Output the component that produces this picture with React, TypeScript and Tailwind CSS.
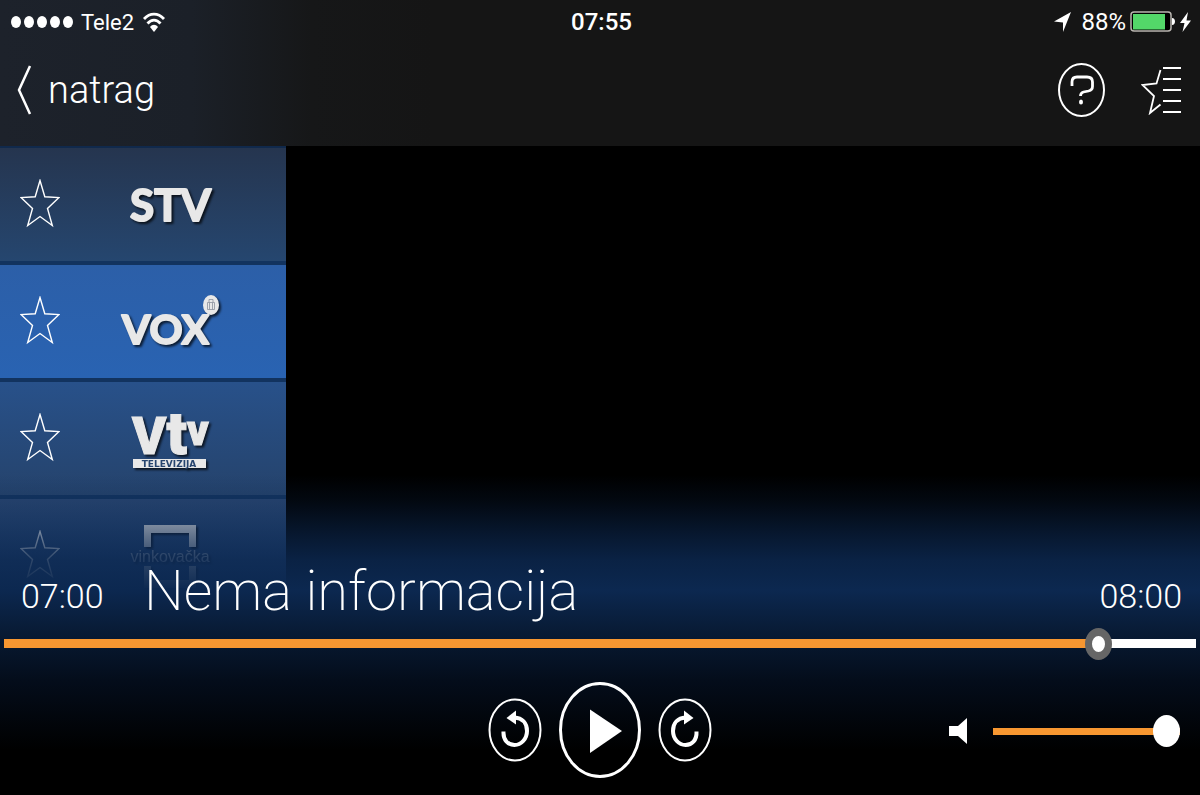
import React, { useState } from "react";

interface Channel {
  id: string;
  name: string;
  background: string;
  logo: React.ReactNode;
}

const StvLogo = () => (
  <svg width="92" height="44" viewBox="0 0 92 44" className="overflow-visible" aria-hidden="true">
    <text
      x="6"
      y="38"
      className="fill-[#e8e8e8] stroke-[#e8e8e8] font-['Lato'] text-[44px] font-bold"
      strokeWidth="2"
      strokeLinejoin="round"
    >
      STV
    </text>
  </svg>
);

const VoxLogo = () => (
  <svg width="104" height="56" viewBox="0 0 104 56" className="overflow-visible" aria-hidden="true">
    <text
      x="4"
      y="50"
      className="fill-[#e8e8e8] stroke-[#e8e8e8] font-['Lato'] text-[41px] font-bold"
      strokeWidth="2"
      strokeLinejoin="round"
    >
      VOX
    </text>
    <ellipse cx="93" cy="11" rx="8" ry="10" fill="#e8e8e8" />
    <path
      d="M89.500 8.500h7v7h-7zM91.500 8.500v7M94.500 8.500v7M91 8V5.500h4V8"
      fill="none"
      stroke="#8a919c"
      strokeWidth="0.800"
    />
  </svg>
);

const VtvLogo = () => (
  <svg width="80" height="62" viewBox="0 0 80 62" className="overflow-visible" aria-hidden="true">
    <text
      x="2"
      y="46"
      className="fill-[#e8e8e8] stroke-[#e8e8e8] font-['Roboto'] text-[52px] font-black"
      strokeWidth="1"
    >
      V
      <tspan className="text-[60px]">t</tspan>
      <tspan dy="-9" className="text-[42px]">
        v
      </tspan>
    </text>
    <rect x="3" y="51" width="73" height="9" fill="#e8e8e8" />
    <text
      x="39"
      y="59"
      textAnchor="middle"
      className="fill-[#27456f] text-[9px] font-bold [font-family:'DejaVu_Sans',sans-serif]"
    >
      TELEVIZIJA
    </text>
  </svg>
);

const VinkovackaLogo = () => (
  <svg width="84" height="66" viewBox="0 0 84 66" className="overflow-visible" aria-hidden="true">
    <path d="M16 24V2h52v22h-7V10H23v14zM16 43h7v14h38V43h7v22H16z" fill="#e8e8e8" />
    <text
      x="42"
      y="39"
      textAnchor="middle"
      className="fill-[#b4bdcb] text-[16px] [font-family:'Liberation_Sans',sans-serif]"
    >
      vinkovačka
    </text>
  </svg>
);

const channels: Channel[] = [
  {
    id: "stv",
    name: "STV",
    background: "bg-linear-to-b from-[#25354f] to-[#25466f]",
    logo: <StvLogo />,
  },
  {
    id: "vox",
    name: "VOX",
    background: "bg-linear-to-b from-[#2c5fa8] to-[#2963b2]",
    logo: <VoxLogo />,
  },
  {
    id: "vtv",
    name: "VTV Televizija",
    background: "bg-linear-to-b from-[#28518a] to-[#25436c]",
    logo: <VtvLogo />,
  },
  {
    id: "vinkovacka",
    name: "Vinkovačka televizija",
    background: "bg-linear-to-b from-[#294671] to-[#234a80]",
    logo: <VinkovackaLogo />,
  },
];

const StatusBar = () => (
  <div className="grid h-11 grid-cols-3 items-center pr-2 pl-[11px]">
    <div className="flex items-center gap-2 text-[22px]">
      <svg width="62" height="14" viewBox="0 0 62 14" fill="#fff" aria-hidden="true">
        {[5, 18, 31, 44, 57].map((cx) => (
          <ellipse key={cx} cx={cx} cy="7" rx="5" ry="6" />
        ))}
      </svg>
      <span>Tele2</span>
      <svg width="24" height="20" viewBox="0 0 24 20" aria-hidden="true">
        <path
          d="M2 7C8 0.500 16 0.500 22 7M5.500 11.500c4-4.500 9-4.500 13 0"
          fill="none"
          stroke="#fff"
          strokeWidth="2.800"
        />
        <path d="M8 15c2.500-3 5.500-3 8 0l-4 5z" fill="#fff" />
      </svg>
    </div>
    <span className="text-center text-2xl font-medium">07:55</span>
    <div className="flex items-center justify-end text-2xl">
      <svg width="17" height="20" viewBox="0 0 17 20" fill="#fff" aria-hidden="true">
        <path d="M17 0L9 20V10.500L0 9.500z" />
      </svg>
      <span className="ml-2.5">88%</span>
      <svg width="46" height="22" viewBox="0 0 46 22" className="ml-1" aria-hidden="true">
        <rect x="1" y="1" width="40" height="19" rx="3" fill="#000" stroke="#b9b5b0" strokeWidth="1.500" />
        <rect x="3" y="3" width="32" height="15.500" fill="#53d769" />
        <path d="M42 7c4 0 4 7 0 7z" fill="#fff" />
      </svg>
      <svg width="12" height="20" viewBox="0 0 12 20" fill="#fff" className="ml-1" aria-hidden="true">
        <path d="M8 0L0 11h4.500L2.500 20 11 8.500H6.500z" />
      </svg>
    </div>
  </div>
);

const Header = () => (
  <header className="bg-[linear-gradient(to_right,#1d222b,#1b2028_16%,#161718_26%,#151515_36%)] pb-[10px]">
    <StatusBar />
    <nav className="flex h-[92px] items-center justify-between pr-[18px] pl-[17px]">
      <a href="#natrag" className="flex items-center gap-4 text-[38px] leading-[48px] font-light">
        <svg width="15" height="50" viewBox="0 0 15 50" aria-hidden="true">
          <path d="M13 1L2 25l11 24" fill="none" stroke="#fff" strokeWidth="2.500" />
        </svg>
        natrag
      </a>
      <div className="flex items-center gap-9">
        <button type="button" aria-label="Pomoć">
          <svg width="48" height="56" viewBox="0 0 48 56" fill="none" stroke="#fff" aria-hidden="true">
            <ellipse cx="24.500" cy="28" rx="22.500" ry="26" strokeWidth="2" />
            <path
              d="M15 24v-4q0-5 5-5h10q5.500 0 5.500 5v4.500q0 3.500-4 4.500l-5 1q-3 .8-3 4"
              strokeWidth="2.800"
            />
            <ellipse cx="24" cy="40" rx="2" ry="2.500" fill="#fff" stroke="none" />
          </svg>
        </button>
        <button type="button" aria-label="Omiljeni kanali">
          <svg width="41" height="50" viewBox="0 0 41 50" fill="none" stroke="#fff" aria-hidden="true">
            <path d="M19.500 5l-4 13.500L1.500 20l11.500 11-4 17 10.500-8.500" strokeWidth="1.800" />
            <path d="M22 3h18M22 14h18M22 25h18M22 36h18M22 47h18" strokeWidth="2" />
          </svg>
        </button>
      </div>
    </nav>
  </header>
);

const ChannelList = () => (
  <ul className="w-[286px] border-t-2 border-[#10294c]">
    {channels.map((channel) => (
      <li
        key={channel.id}
        className={`flex h-[117px] items-center border-b-4 border-[#12335f] pl-5 ${channel.background}`}
      >
        <button type="button" aria-label={`Dodaj ${channel.name} u omiljene`}>
          <svg width="40" height="52" viewBox="0 0 40 52" aria-hidden="true">
            <path
              d="M20 1.500l4.800 16.300 14.200.8-11.500 10.900 4.800 17L20 37.500 7.700 46.500l4.800-17L1 18.600l14.200-.8z"
              fill="none"
              stroke="#fff"
              strokeWidth="1.400"
            />
          </svg>
        </button>
        <button
          type="button"
          aria-label={channel.name}
          className="ml-14 flex w-[108px] justify-center drop-shadow-[2px_2px_1px_rgba(0,0,0,0.7)]"
        >
          {channel.logo}
        </button>
      </li>
    ))}
  </ul>
);

const SeekBar = () => {
  const [position, setPosition] = useState(92.8);

  return (
    <input
      type="range"
      aria-label="Pozicija"
      min={0}
      max={100}
      step="any"
      value={position}
      onChange={(e) => setPosition(Number(e.target.value))}
      style={{
        backgroundImage: `linear-gradient(to right, #f79731 ${position}%, #fff ${position}%)`,
      }}
      className="mx-1 my-3 block h-[9px] appearance-none [&::-webkit-slider-thumb]:h-8 [&::-webkit-slider-thumb]:w-[27px] [&::-webkit-slider-thumb]:appearance-none [&::-webkit-slider-thumb]:rounded-[50%] [&::-webkit-slider-thumb]:border-x-[7px] [&::-webkit-slider-thumb]:border-y-8 [&::-webkit-slider-thumb]:border-[#666] [&::-webkit-slider-thumb]:bg-white"
    />
  );
};

const VolumeControl = () => {
  const [volume, setVolume] = useState(100);

  return (
    <div className="flex items-center justify-end gap-[26px] pt-0.5">
      <svg width="18" height="26" viewBox="0 0 18 26" fill="#fff" aria-hidden="true">
        <path d="M0 8h9l9-8v26l-9-8H0z" />
      </svg>
      <input
        type="range"
        aria-label="Glasnoća"
        min={0}
        max={100}
        value={volume}
        onChange={(e) => setVolume(Number(e.target.value))}
        style={{
          backgroundImage: `linear-gradient(to right, #f79731 ${volume}%, #fff ${volume}%)`,
        }}
        className="h-[7px] w-[187px] appearance-none [&::-webkit-slider-thumb]:h-8 [&::-webkit-slider-thumb]:w-[27px] [&::-webkit-slider-thumb]:appearance-none [&::-webkit-slider-thumb]:rounded-[50%] [&::-webkit-slider-thumb]:bg-white"
      />
    </div>
  );
};

const Replay = () => (
  <svg width="54" height="64" viewBox="0 0 54 64" aria-hidden="true">
    <ellipse cx="27" cy="32" rx="25.500" ry="30.500" fill="none" stroke="#fff" strokeWidth="2" />
    <path d="M15.500 33.500C15 42 20 47 26.500 47S39 41 39 33 34 20 26.500 19.500" fill="none" stroke="#fff" strokeWidth="4" />
    <path d="M18.500 20l9.500-7.500v14z" fill="#fff" />
  </svg>
);

const PlayerControls = () => (
  <div className="grid grid-cols-[1fr_auto_1fr] items-center pr-5">
    <div />
    <div className="flex items-center gap-[17px] pl-5">
      <button type="button" aria-label="Natrag">
        <Replay />
      </button>
      <button type="button" aria-label="Reproduciraj">
        <svg width="82" height="96" viewBox="0 0 82 96" aria-hidden="true">
          <ellipse cx="41" cy="48" rx="39.500" ry="46.500" fill="none" stroke="#fff" strokeWidth="3" />
          <path d="M31 27.500l32 21.500-32 22z" fill="#fff" />
        </svg>
      </button>
      <button type="button" aria-label="Naprijed" className="-scale-x-100">
        <Replay />
      </button>
    </div>
    <VolumeControl />
  </div>
);

const PlayerOverlay = () => (
  <section className="absolute inset-x-0 bottom-0 flex flex-col bg-[linear-gradient(to_bottom,rgba(12,40,80,0)_0px,rgba(12,40,80,0.2)_25px,rgba(12,40,80,0.6)_60px,rgba(12,40,80,0.85)_85px,#0c2850_115px,#081a33_160px,#040d1b_205px,#000_275px)] pt-[84px] pb-[17px]">
    <div className="flex items-end pr-[18px] pl-[21px]">
      <time className="w-[123px] text-[34px] leading-[54px] font-light">07:00</time>
      <h1 className="flex-1 text-[56px] leading-[64px] font-extralight">Nema informacija</h1>
      <time className="text-[34px] leading-[54px] font-light">08:00</time>
    </div>
    <div className="mt-1 mb-[22px] grid">
      <SeekBar />
    </div>
    <PlayerControls />
  </section>
);

export default function App() {
  return (
    <div className="relative flex min-h-screen flex-col bg-black font-['Roboto',sans-serif] text-white">
      <Header />
      <main className="flex-1">
        <ChannelList />
      </main>
      <PlayerOverlay />
    </div>
  );
}
